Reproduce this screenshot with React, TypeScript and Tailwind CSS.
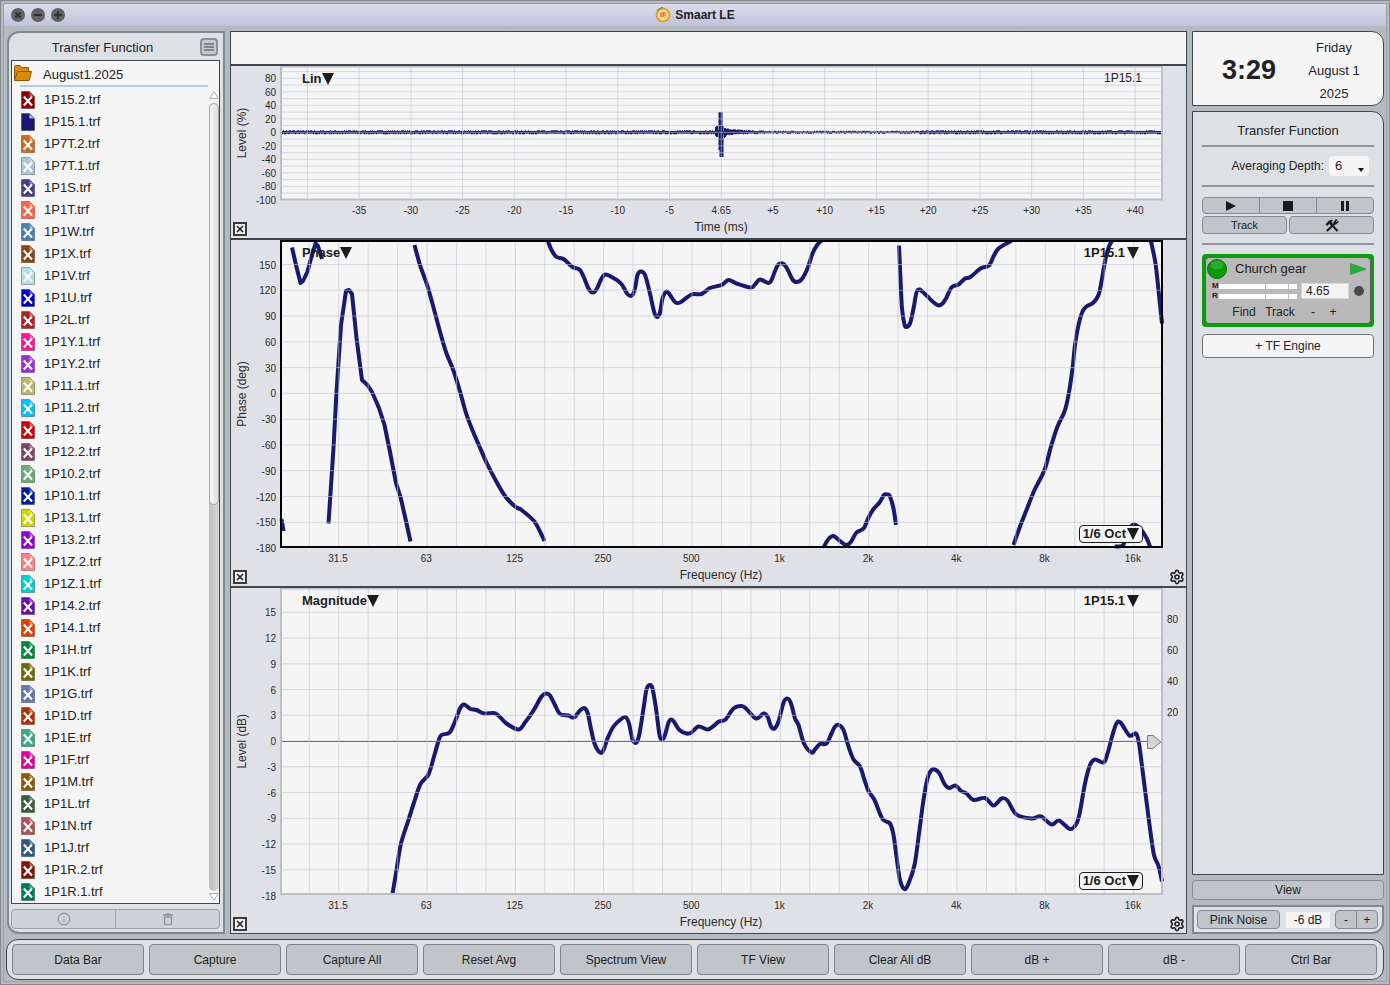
import React from 'react';
import { Info, Settings } from 'lucide-react';

type Point = [number, number];

interface TraceFile {
  name: string;
  color: string;
  active?: boolean;
}

const FILES: TraceFile[] = [
  { name: '1P15.2.trf', color: '#8b0000' },
  { name: '1P15.1.trf', color: '#191970', active: true },
  { name: '1P7T.2.trf', color: '#d2691e' },
  { name: '1P7T.1.trf', color: '#b0c4de' },
  { name: '1P1S.trf', color: '#483d8b' },
  { name: '1P1T.trf', color: '#ff6347' },
  { name: '1P1W.trf', color: '#4682b4' },
  { name: '1P1X.trf', color: '#8b4513' },
  { name: '1P1V.trf', color: '#b0e0e6' },
  { name: '1P1U.trf', color: '#0000cd' },
  { name: '1P2L.trf', color: '#b22222' },
  { name: '1P1Y.1.trf', color: '#ff1493' },
  { name: '1P1Y.2.trf', color: '#9932cc' },
  { name: '1P11.1.trf', color: '#bdb76b' },
  { name: '1P11.2.trf', color: '#00bfff' },
  { name: '1P12.1.trf', color: '#cc0000' },
  { name: '1P12.2.trf', color: '#804664' },
  { name: '1P10.2.trf', color: '#6aad74' },
  { name: '1P10.1.trf', color: '#001e9c' },
  { name: '1P13.1.trf', color: '#d6d600' },
  { name: '1P13.2.trf', color: '#9400d3' },
  { name: '1P1Z.2.trf', color: '#ff8080' },
  { name: '1P1Z.1.trf', color: '#00ced1' },
  { name: '1P14.2.trf', color: '#6a0dad' },
  { name: '1P14.1.trf', color: '#e04000' },
  { name: '1P1H.trf', color: '#008b3c' },
  { name: '1P1K.trf', color: '#6e6e00' },
  { name: '1P1G.trf', color: '#6478b4' },
  { name: '1P1D.trf', color: '#b43200' },
  { name: '1P1E.trf', color: '#3caa82' },
  { name: '1P1F.trf', color: '#dc00a0' },
  { name: '1P1M.trf', color: '#8c5a00' },
  { name: '1P1L.trf', color: '#3c5f3c' },
  { name: '1P1N.trf', color: '#b45050' },
  { name: '1P1J.trf', color: '#2d5a87' },
  { name: '1P1R.2.trf', color: '#821400' },
  { name: '1P1R.1.trf', color: '#007d5f' },
];

const COMMANDS = [
  'Data Bar',
  'Capture',
  'Capture All',
  'Reset Avg',
  'Spectrum View',
  'TF View',
  'Clear All dB',
  'dB +',
  'dB -',
  'Ctrl Bar',
];

// the low end has few bins, so it is drawn as straight segments
const PHASE_LOW: Point[][] = [
  [[281.5, 519], [283.5, 531]],
  [[292, 247.5], [296, 265], [300.5, 283], [303, 281], [307.5, 271.5], [310, 262], [315.5, 243.5], [318, 246], [322, 259]],
  [[328.5, 523.5], [333.5, 448], [336.5, 392], [341, 325], [346, 291], [349, 290], [352, 294], [356.5, 338], [362, 380], [367.5, 385], [372, 392], [379, 408], [384.5, 425], [390, 452], [396, 483], [400.5, 497], [406, 521], [410.5, 541.5]],
];

const PHASE: Point[][] = [
  [[414.5, 245], [420, 265], [426.5, 283], [432, 302], [439, 328], [446, 352], [452.5, 368], [459, 388], [466, 413], [473, 431.5], [479.5, 446.5], [486.5, 462.5], [495.5, 480], [505, 496], [515, 506.5], [521.5, 510], [534, 521], [540, 531.5], [544.5, 541]],
  [[547.5, 240], [551.5, 250], [556.5, 257], [563.5, 259], [572.5, 267], [579.5, 269.5], [583.5, 276.5], [588.5, 288.5], [592.5, 292.5], [596.5, 289.5], [601.5, 278.5], [605.5, 274.5], [612.5, 277.5], [621, 283.5], [627.5, 294], [632, 295.5], [635, 288.5], [637.5, 275], [641, 271.5], [645, 275], [649.5, 291.5], [655, 314.5], [659.5, 314.5], [662.5, 298.5], [666.5, 291.5], [670, 295], [675, 302], [680, 302.5], [691.5, 294.5], [701.5, 294], [710, 288], [721.5, 285], [728.5, 280], [736.5, 283.5], [750.5, 287.5], [755, 284.5], [760, 279.5], [768.5, 283], [771.5, 280], [777.5, 265.5], [782.5, 263.5], [786.5, 267.5], [792.5, 279.5], [796.5, 282], [801.5, 279.5], [807.5, 268.5], [812.5, 253.5], [817.5, 244.5], [822.5, 240]],
  [[824, 546.5], [828.5, 539], [833.5, 536], [840, 541], [846, 545], [850.5, 542.5], [856.5, 532.5], [863.5, 528.5], [868.5, 517.5], [873.5, 509], [879.5, 502.5], [884, 495], [887.5, 494.5], [890, 496.5], [893.5, 508.5], [896, 525]],
  [[899, 245.5], [900.5, 278.5], [902, 308.5], [904.5, 324.5], [906.5, 327], [910, 323.5], [913.5, 308.5], [916.5, 292.5], [919.5, 289.5], [925, 294], [931, 300], [937.5, 305], [941.5, 304.5], [946, 298.5], [951.5, 287.5], [958.5, 284.5], [965, 278.5], [970.5, 277], [980.5, 268.5], [989, 265.5], [993.5, 256.5], [998.5, 248.5], [1010, 241.5], [1012, 240]],
  [[1013.5, 545], [1020, 526.5], [1026.5, 510], [1034.5, 490], [1044.5, 470], [1051, 446.5], [1057.5, 426.5], [1064.5, 411.5], [1068.5, 395], [1072.5, 368.5], [1075, 345], [1078.5, 325], [1082.5, 311.5], [1086.5, 306.5], [1093.5, 302.5], [1098.5, 295], [1101.5, 281.5], [1105, 261.5], [1109, 246.5], [1112.5, 240]],
  [[1115, 546.5], [1123, 545], [1128, 531.5], [1133.5, 524.5], [1140, 528.5], [1146.5, 538], [1150, 546.5]],
  [[1151, 241.5], [1155.5, 263.5], [1159, 295], [1162, 323.5]],
];

const MAGNITUDE: Point[] = [
  [392.5, 894], [396.5, 870], [401, 843.5], [408.5, 820], [414, 802.5], [420.5, 784], [428.5, 774.5], [434, 756.5], [438.5, 741], [441.5, 735], [449.5, 732.5], [455, 721.5], [460, 708.5], [464, 704.5], [470.5, 709], [476.5, 710], [484, 713.5], [493.5, 713], [498.5, 715.5], [506.5, 723.5], [518.5, 729.5], [525, 722.5], [533.5, 710.5], [541.5, 696.5], [546, 693.5], [550, 695.5], [555, 705], [560, 714], [568.5, 715.5], [574, 717.5],
  [579.5, 711], [584, 708], [587.5, 712.5], [590.5, 726.5], [594.5, 743.5], [600, 752.5], [603.5, 750], [607.5, 738.5], [613.5, 726.5], [620, 720], [625.5, 717], [629, 723.5], [632.5, 739.5], [636.5, 742.5], [639.5, 733.5], [643.5, 708.5], [646.5, 689.5], [650, 685], [652.5, 688.5], [656, 708.5], [659.5, 735], [662, 740], [665, 735], [668.5, 722.5], [671.5, 719.5], [674.5, 722.5], [679.5, 730], [686.5, 733.5], [691.5, 732.5], [698.5, 726.5], [707.5, 729.5], [713.5, 726], [719, 721.5], [725.5, 719.5], [733.5, 708.5], [741.5, 706], [746.5, 709], [756, 718.5], [763.5, 713.5], [767.5, 716.5], [771, 726.5], [774.5, 728.5], [778.5, 721.5], [784, 701.5], [788.5, 699], [791.5, 705], [795, 718.5], [798.5, 725], [804, 743.5], [811.5, 752.5], [815, 749.5], [820, 744], [826.5, 743.5], [831.5, 733.5], [835, 726.5], [839, 725], [843.5, 730], [848.5, 746.5], [853.5, 759.5], [860, 766.5], [864.5, 780], [868.5, 791], [874.5, 800], [882.5, 819],
  [890, 823.5], [893.5, 835], [896.5, 856.5], [900, 880], [904.5, 889], [908.5, 883.5], [914.5, 865], [919, 833.5], [923.5, 800], [927.5, 778.5], [931, 770.5], [935, 769.5], [939.5, 773.5], [944.5, 784], [949, 788], [955.5, 785.5], [961, 791], [966.5, 793.5], [973.5, 800], [985, 798], [993.5, 805.5], [1001.5, 798.5], [1007.5, 800.5], [1016.5, 814.5], [1031.5, 818.5], [1041, 816.5], [1051.5, 824.5], [1059, 820.5], [1070, 829], [1076.5, 823.5], [1080, 811.5], [1085, 783.5], [1090, 765], [1095, 759.5], [1103.5, 762.5], [1107.5, 753.5], [1112.5, 735], [1116.5, 723.5], [1120.5, 722.5], [1129.5, 735.5], [1136, 733.5], [1139, 743.5], [1142.5, 770], [1146.5, 801.5], [1150, 828.5], [1154, 855], [1158.5, 866], [1162, 881.5],
];

// third-octave grid, labels sit on every third line
const FREQ_LINES = Array.from({ length: 29 }, (_, i) => 309.3 + i * 29.44);
const FREQ_LABELS = ['31.5', '63', '125', '250', '500', '1k', '2k', '4k', '8k', '16k'];
const TIME_LINES = Array.from({ length: 17 }, (_, i) => 307.4 + i * 51.73);
const TIME_LABELS = ['-35', '-30', '-25', '-20', '-15', '-10', '-5', '4.65', '+5', '+10', '+15', '+20', '+25', '+30', '+35', '+40'];

const linearPath = (pts: Point[]) => 'M' + pts.map((p) => p.join(' ')).join('L');

const smoothPath = (pts: Point[]) => {
  let d = `M${pts[0][0]} ${pts[0][1]}`;
  for (let i = 0; i < pts.length - 1; i++) {
    const p0 = pts[i - 1] || pts[i];
    const p1 = pts[i];
    const p2 = pts[i + 1];
    const p3 = pts[i + 2] || p2;
    d += `C${p1[0] + (p2[0] - p0[0]) / 6} ${p1[1] + (p2[1] - p0[1]) / 6} ${p2[0] - (p3[0] - p1[0]) / 6} ${p2[1] - (p3[1] - p1[1]) / 6} ${p2[0]} ${p2[1]}`;
  }
  return d;
};

const impulsePath = () => {
  let d = '';
  let seed = 7;
  for (let x = 282; x < 1162; x++) {
    seed = (seed * 16807) % 2147483647;
    const r = seed / 2147483647;
    const after = x > 723 && x < 920;
    const decay = after ? 3 * Math.exp(-(x - 723) / 16) : 0;
    const base = after ? 0.9 : 1.4;
    const up = base + decay + (r > 0.6 ? 0.6 : 0);
    const down = base + decay * 0.7 + (r < 0.35 ? 0.6 : 0);
    d += `M${x + 0.5} ${132.3 - up}V${132.3 + down}`;
  }
  return d;
};

interface ChartProps {
  viewBox: string;
  frame: { y: number; h: number; color: string };
  xLines: number[];
  yLines: number[];
  xTicks: { x: number; label: string }[];
  yTicks: { y: number; label: string }[];
  rightTicks?: { y: number; label: string }[];
  xTitle: string;
  yTitle: string;
  xTickY: number;
  trace: React.ReactNode;
  settings?: boolean;
  children: React.ReactNode;
}

const Chart: React.FC<ChartProps> = ({
  viewBox,
  frame,
  xLines,
  yLines,
  xTicks,
  yTicks,
  rightTicks = [],
  xTitle,
  yTitle,
  xTickY,
  trace,
  settings = false,
  children,
}) => {
  const midY = frame.y + frame.h / 2;
  const bottom = frame.y + frame.h;
  return (
    <section className="relative bg-[#e0e1e6]">
      <svg viewBox={viewBox} className="block w-full h-auto" fill="#2b2b2b">
        <rect x="281" y={frame.y} width="881" height={frame.h} fill="#f5f5f5" />
        {xTicks.map((t) => (
          <text key={t.label} x={t.x} y={xTickY} fontSize="10" textAnchor="middle">
            {t.label}
          </text>
        ))}
        {yTicks.map((t) => (
          <text key={t.label} x="276" y={t.y + 4} fontSize="10" textAnchor="end">
            {t.label}
          </text>
        ))}
        {rightTicks.map((t) => (
          <text key={t.label} x="1167" y={t.y + 4} fontSize="10">
            {t.label}
          </text>
        ))}
        <text x="721" y={xTickY + 17} fontSize="12" textAnchor="middle">
          {xTitle}
        </text>
        <text transform={`translate(246 ${midY}) rotate(-90)`} fontSize="12" textAnchor="middle">
          {yTitle}
        </text>
        <g fill="none">{trace}</g>
        <g stroke="#bfc5cf" strokeOpacity="0.6">
          {xLines.map((x) => (
            <line key={x} x1={x} x2={x} y1={frame.y} y2={bottom} />
          ))}
          {yLines.map((y) => (
            <line key={y} x1="281" x2="1162" y1={y} y2={y} />
          ))}
        </g>
        <rect x="281" y={frame.y} width="881" height={frame.h} fill="none" stroke={frame.color} strokeWidth="2" />
      </svg>
      {children}
      <button
        aria-label="Close plot"
        className="absolute left-0.5 bottom-0.5 w-3.5 h-3.5 bg-[#f0f0f0] border-2 border-[#3a3a3a] flex items-center justify-center"
      >
        <svg viewBox="0 0 8 8" className="w-2 h-2" stroke="#222" strokeWidth="1.6">
          <path d="M1 1L7 7M7 1L1 7" />
        </svg>
      </button>
      {settings && (
        <button aria-label="Plot settings" className="absolute right-px bottom-px">
          <Settings size={16} strokeWidth={2.4} color="#222" />
        </button>
      )}
    </section>
  );
};

const PlotSelect: React.FC<{ value: string; label: string; className: string }> = ({ value, label, className }) => (
  <div className={`absolute flex items-center ${className}`}>
    <select
      aria-label={label}
      className="appearance-none [field-sizing:content] bg-transparent font-bold text-[13px] leading-4 text-[#1c1c1c] outline-none"
    >
      <option>{value}</option>
    </select>
    <svg viewBox="0 0 12 12" className="w-3 h-3 pointer-events-none" fill="#1c1c1c">
      <path d="M0 0H12L6 12Z" />
    </svg>
  </div>
);

const FileIcon: React.FC<{ file: TraceFile }> = ({ file }) => (
  <svg viewBox="0 0 14 18" className="w-3.5 h-[18px] shrink-0">
    <path d="M0.5 0.5H8.5L13.5 5.5V17.5H0.5Z" fill={file.color} stroke="#000" strokeOpacity="0.3" />
    <path d="M8.5 1V5.5H13Z" fill="#fff" fillOpacity={file.active ? 0.7 : 0.35} />
    {!file.active && <path d="M2.8 5.5L11 14.5M11 5.5L2.8 14.5" stroke="#fff" strokeWidth="2" />}
  </svg>
);

const btn = 'border border-[#858c91] bg-[#bfc5c9] text-xs text-[#222] flex items-center justify-center';

const TitleBar = () => (
  <header className="relative h-[22px] bg-linear-to-b from-[#dcdeeb] to-[#c0c3db] flex items-center justify-center gap-1">
    <div className="absolute left-[7px] top-1 flex gap-1.5">
      {['M4.5 4.5L9.5 9.5M9.5 4.5L4.5 9.5', 'M3 7H11', 'M3 7H11M7 3V11'].map((d, i) => (
        <button key={d} aria-label={['Close', 'Minimize', 'Zoom'][i]}>
          <svg viewBox="0 0 14 14" className="block w-3.5 h-3.5">
            <circle cx="7" cy="7" r="7" fill="#626262" />
            <path d={d} stroke="#303030" strokeWidth="2" />
          </svg>
        </button>
      ))}
    </div>
    <svg viewBox="0 0 16 16" className="w-4 h-4">
      <circle cx="8" cy="8" r="7.5" fill="#e9a02c" />
      <path d="M2 4A7.5 7.5 0 0 1 8 0.5" stroke="#5a9a4a" fill="none" strokeWidth="1.2" />
      <circle cx="8" cy="8" r="4.8" fill="#f6cf85" stroke="#fff" strokeOpacity="0.8" />
      <path d="M6 5.5V10M8 10V5.8H11M8 8H10.5" stroke="#c87814" strokeWidth="1.2" fill="none" />
    </svg>
    <h1 className="text-xs font-bold text-[#222]">Smaart LE</h1>
  </header>
);

const DataBar = () => (
  <aside className="w-[218px] shrink-0 flex flex-col border-2 border-[#7f8a90] rounded-l-xl bg-[#dde1e4] pl-0.5 pr-[3px] pb-[3px]">
    <div className="h-[27px] flex items-center">
      <h2 className="flex-1 pt-0.5 pr-1.5 text-center text-[13px]">Transfer Function</h2>
      <button
        aria-label="Menu"
        className="w-[18px] h-[18px] mr-0.5 border-2 border-[#8b9297] rounded bg-[#c3c9cd] flex items-center justify-center"
      >
        <svg viewBox="0 0 10 8" className="w-2.5 h-2" stroke="#444" strokeWidth="1.2">
          <path d="M0 1H10M0 4H10M0 7H10" />
        </svg>
      </button>
    </div>
    <div className="flex-1 border border-[#3f474b] bg-[#f5f5f5]">
      <div className="h-[27px] flex items-center pl-0.5 pb-1 gap-[11px]">
        <svg viewBox="0 0 18 16" className="w-[18px] h-4" fill="#d98c08" stroke="#8a5600">
          <path d="M0.5 15V1.5L1.5 0.5H6L7.5 2.5H14.5V15Z" />
          <path d="M0.5 15.5L3.5 6.5H17.5L15 15.5Z" />
        </svg>
        <span className="pt-1 text-[13px]">August1.2025</span>
      </div>
      <div className="flex">
        <ul className="flex-1 ml-2 -mt-[3px] pt-0.5 border-t-2 border-[#b8c9df]">
          {FILES.map((file) => (
            <li key={file.name}>
              <button className="h-[22px] flex items-center gap-[9px] px-px text-[13px]">
                <FileIcon file={file} />
                {file.name}
              </button>
            </li>
          ))}
        </ul>
        <div className="w-[11px] flex flex-col items-center pt-[3px]">
          <svg viewBox="0 0 10 8" className="w-2.5 h-2" fill="#fff" stroke="#aaa">
            <path d="M5 0.8L9.2 7.5H0.8Z" />
          </svg>
          <div className="w-2.5 flex-1 mt-1 rounded-full bg-linear-to-r from-[#bdbdbd] to-[#d8d8d8]">
            <div className="h-[51%] rounded-full border border-[#aaa] bg-linear-to-r from-[#fafafa] to-[#ddd]"></div>
          </div>
          <svg viewBox="0 0 10 8" className="w-2.5 h-2 my-0.5" fill="#fff" stroke="#aaa">
            <path d="M5 7.2L9.2 0.5H0.8Z" />
          </svg>
        </div>
      </div>
    </div>
    <div className="mt-[5px] h-5 flex border border-[#9aa2a7] rounded bg-[#cdd3d7] text-[#8e969b]">
      <button aria-label="Info" className="flex-1 flex items-center justify-center border-r border-[#9aa2a7]">
        <Info size={14} />
      </button>
      <button aria-label="Delete" className="flex-1 flex items-center justify-center">
        <svg viewBox="0 0 10 12" className="w-2.5 h-3" fill="none" stroke="currentColor">
          <path d="M0 2H10M3.5 0.8H6.5" strokeWidth="1.3" />
          <path d="M1.6 3.8V11.3H8.4V3.8Z" strokeWidth="1.3" />
        </svg>
      </button>
    </div>
  </aside>
);

const PlotArea = () => {
  const freqTicks = FREQ_LABELS.map((label, i) => ({ label, x: 338 + i * 88.32 }));
  const dbTicks = Array.from({ length: 12 }, (_, i) => ({ label: String(15 - i * 3), y: 612.3 + i * 25.75 }));
  const degTicks = Array.from({ length: 12 }, (_, i) => ({ label: String(150 - i * 30), y: 264.5 + i * 25.78 }));
  const pctTicks = Array.from({ length: 10 }, (_, i) => ({ label: String(80 - i * 20), y: 78.3 + i * 13.5 }));
  return (
    <main className="flex-1 min-w-0 flex flex-col border border-[#3f474b] bg-[#e0e1e6]">
      <div className="h-[34px] bg-[#f5f5f5] border-b-2 border-[#3f474b]"></div>
      <Chart
        viewBox="231 66 955 172"
        frame={{ y: 66.5, h: 133, color: '#bcc0c6' }}
        xLines={TIME_LINES}
        yLines={Array.from({ length: 19 }, (_, i) => 71.6 + i * 6.75)}
        xTicks={TIME_LABELS.map((label, i) => ({ label, x: TIME_LINES[i + 1] }))}
        yTicks={pctTicks}
        xTitle="Time (ms)"
        yTitle="Level (%)"
        xTickY={214}
        trace={
          <g stroke="#191970">
            <path d={impulsePath()} />
            <path d="M715.5 127V136M716.5 126V137M717.5 126V137M724.5 128V138M725.5 128.5V137" />
            <path d="M720.5 112V150" strokeWidth="4" />
            <path d="M721.5 126V157" strokeWidth="4" />
          </g>
        }
      >
        <PlotSelect label="Impulse scale" value="Lin" className="left-[71px] top-[5px]" />
        <span className="absolute right-11 top-1 text-xs leading-4 text-[#222]">1P15.1</span>
      </Chart>
      <div className="h-0.5 bg-[#3f474b]"></div>
      <Chart
        viewBox="231 240 955 346"
        frame={{ y: 241, h: 306, color: '#000' }}
        xLines={FREQ_LINES}
        yLines={degTicks.slice(0, 11).map((t) => t.y)}
        xTicks={freqTicks}
        yTicks={degTicks}
        xTitle="Frequency (Hz)"
        yTitle="Phase (deg)"
        xTickY={562}
        settings
        trace={
          <g stroke="#191970" strokeWidth="4">
            {PHASE_LOW.map((seg, i) => (
              <path key={i} d={linearPath(seg)} strokeLinejoin="round" />
            ))}
            {PHASE.map((seg, i) => (
              <path key={i} d={smoothPath(seg)} />
            ))}
          </g>
        }
      >
        <PlotSelect label="Phase plot type" value="Phase" className="left-[71px] top-[5px]" />
        <PlotSelect label="Phase trace" value="1P15.1" className="right-[47px] top-[5px] gap-0.5" />
        <PlotSelect
          label="Phase smoothing"
          value="1/6 Oct"
          className="right-[43px] bottom-[43px] gap-px h-[18px] px-[3px] border border-[#1c1c1c] rounded bg-[#f5f5f5]"
        />
      </Chart>
      <div className="h-0.5 bg-[#3f474b]"></div>
      <Chart
        viewBox="231 588 955 345"
        frame={{ y: 588.5, h: 305.5, color: '#bcc0c6' }}
        xLines={FREQ_LINES}
        yLines={dbTicks.slice(0, 11).map((t) => t.y)}
        xTicks={freqTicks}
        yTicks={dbTicks}
        rightTicks={['80', '60', '40', '20'].map((label, i) => ({ label, y: 619.3 + i * 31 }))}
        xTitle="Frequency (Hz)"
        yTitle="Level (dB)"
        xTickY={909}
        settings
        trace={
          <>
            <path d={smoothPath(MAGNITUDE)} stroke="#191970" strokeWidth="4" />
            <line x1="281" x2="1162" y1="741.5" y2="741.5" stroke="#44474c" />
            <path d="M1147.5 735.5H1153L1161 742L1153 748.5H1147.5Z" fill="#d6d6d6" stroke="#777" />
          </>
        }
      >
        <PlotSelect label="Magnitude plot type" value="Magnitude" className="left-[71px] top-[5px]" />
        <PlotSelect label="Magnitude trace" value="1P15.1" className="right-[47px] top-[5px] gap-0.5" />
        <PlotSelect
          label="Magnitude smoothing"
          value="1/6 Oct"
          className="right-[43px] bottom-[43px] gap-px h-[18px] px-[3px] border border-[#1c1c1c] rounded bg-[#f5f5f5]"
        />
      </Chart>
    </main>
  );
};

const Meter: React.FC<{ name: string }> = ({ name }) => (
  <div className="flex items-center h-2.5">
    <span className="w-[7px] text-[8px] leading-none font-bold">{name}</span>
    <div className="flex gap-px">
      <i className="w-[46px] h-[5px] bg-white"></i>
      <i className="w-[22px] h-[5px] bg-white"></i>
      <i className="w-2 h-[5px] bg-white"></i>
    </div>
  </div>
);

const EngineCard = () => (
  <div className="mt-[9px] border-3 border-[#0b9c10] rounded bg-[#0b9c10]">
    <div className="h-[67px] border border-[#5c5c5c] rounded-sm bg-[#b9b9b9] px-px">
      <div className="flex items-center h-[22px]">
        <svg viewBox="0 0 20 20" className="w-5 h-5">
          <circle cx="10" cy="10" r="9.5" fill="#089a08" stroke="#066d06" />
          <ellipse cx="10" cy="6" rx="6.5" ry="4.5" fill="#fff" fillOpacity="0.15" />
        </svg>
        <h3 className="ml-2 flex-1 text-[13px]">Church gear</h3>
        <button aria-label="Run engine" className="mr-0.5">
          <svg viewBox="0 0 17 12" className="block w-[17px] h-3">
            <path d="M0.5 0.5L16 6L0.5 11.5Z" fill="#22b03c" stroke="#3f9a50" />
          </svg>
        </button>
      </div>
      <div className="flex items-center h-[22px] pl-[5px]">
        <div>
          <Meter name="M" />
          <Meter name="R" />
        </div>
        <input
          aria-label="Delay (ms)"
          defaultValue="4.65"
          className="ml-1 w-12 h-4 pl-1 text-xs bg-[#f3f3f3] border border-[#d8d8d8] outline-none"
        />
        <span className="ml-[5px] w-2.5 h-2.5 rounded-full bg-[#4a4a4a]"></span>
      </div>
      <div className="flex items-center h-5 pl-[22px] text-xs">
        <button className="w-[30px]">Find</button>
        <button className="ml-1 w-[34px]">Track</button>
        <button className="ml-1.5 w-5">-</button>
        <button className="w-5">+</button>
      </div>
    </div>
  </div>
);

const ControlBar = () => (
  <aside className="w-48 shrink-0 flex flex-col gap-[5px]">
    <div className="h-[75px] flex items-center border border-[#3f474b] rounded-r-xl bg-[#f5f5f5]">
      <time className="flex-1 pl-5 pt-1 text-center text-[27px] leading-none font-bold">3:29</time>
      <div className="w-[98px] pt-[3px] text-center text-[13px] leading-[23px] text-[#222]">
        <p>Friday</p>
        <p>August 1</p>
        <p>2025</p>
      </div>
    </div>
    <div className="flex-1 border border-[#3f474b] rounded-tr-xl bg-[#dde1e4] px-[9px]">
      <h2 className="h-[33px] pt-[9px] text-center text-[13px]">Transfer Function</h2>
      <hr className="border-t-2 border-[#8f979c]" />
      <div className="h-[38px] flex items-center justify-end gap-[5px] pr-[5px] text-xs">
        <label htmlFor="avg-depth">Averaging Depth:</label>
        <div className="relative">
          <select
            id="avg-depth"
            className="appearance-none block w-10 h-5 pl-1.5 rounded-sm bg-[#f5f5f5] text-[13px] outline-none"
          >
            <option>6</option>
          </select>
          <svg viewBox="0 0 6 4" className="absolute right-[5px] bottom-1 w-1.5 h-1 pointer-events-none" fill="#111">
            <path d="M0 0H6L3 4Z" />
          </svg>
        </div>
      </div>
      <hr className="border-t-2 border-[#8f979c]" />
      <div className="mt-2.5 flex">
        <button aria-label="Play" className={`${btn} flex-1 h-[17px] rounded-l`}>
          <svg viewBox="0 0 10 10" className="w-2.5 h-2.5" fill="#1a1a1a"><path d="M0 0L10 5L0 10Z" /></svg>
        </button>
        <button aria-label="Stop" className={`${btn} flex-1 h-[17px] -mx-px`}>
          <svg viewBox="0 0 10 10" className="w-2.5 h-2.5" fill="#1a1a1a"><path d="M0 0H10V10H0Z" /></svg>
        </button>
        <button aria-label="Pause" className={`${btn} flex-1 h-[17px] rounded-r`}>
          <svg viewBox="0 0 10 10" className="w-2.5 h-2.5" fill="#1a1a1a"><path d="M1 0H4V10H1ZM6 0H9V10H6Z" /></svg>
        </button>
      </div>
      <div className="mt-0.5 flex gap-0.5">
        <button className="flex-1 h-[18px] rounded border border-[#858c91] bg-[#bfc5c9] text-[11px] text-[#222]">Track</button>
        <button aria-label="Tools" className={`${btn} flex-1 h-[18px] rounded`}>
          <svg viewBox="0 0 14 13" className="w-3.5 h-[13px]" fill="none" stroke="#1a1a1a">
            <path d="M12.5 12L6 5" strokeWidth="2" />
            <path d="M0.8 5.4L2.2 3.8C3.5 1.8 5.5 0.8 7.8 1.2L6.2 2.6L7.6 4.2L5.6 6L4.2 4.6L2.4 6.6Z" fill="#1a1a1a" strokeWidth="0.5" />
            <path d="M1.8 12L10 4.2" strokeWidth="2.2" />
            <path d="M12.2 0.8L10.6 2.4L11.4 3.4L13.2 2.2A2.8 2.8 0 0 1 9.2 4.8A2.8 2.8 0 0 1 12.2 0.8Z" fill="#1a1a1a" strokeWidth="0.7" />
          </svg>
        </button>
      </div>
      <hr className="mt-[9px] border-t-2 border-[#8f979c]" />
      <EngineCard />
      <button className="mt-[7px] w-full h-6 rounded border border-[#6d7478] bg-[#f5f5f5] text-xs">+ TF Engine</button>
    </div>
    <button className={`${btn} h-5 rounded`}>View</button>
    <div className="h-[29px] flex items-center border-2 border-[#7f8a90] rounded-br-xl bg-[#dde1e4] pl-[3px] pr-1">
      <button className={`${btn} w-[83px] h-[19px] rounded`}>Pink Noise</button>
      <span className="ml-1.5 w-11 h-4 bg-[#f5f5f5] text-center text-xs leading-4">-6 dB</span>
      <div className="ml-auto flex">
        <button className={`${btn} w-[22px] h-[19px] rounded-l`}>-</button>
        <button className={`${btn} w-[22px] h-[19px] rounded-r -ml-px`}>+</button>
      </div>
    </div>
  </aside>
);

const App: React.FC = () => {
  return (
    <div className="min-h-screen flex flex-col border border-[#85898c] bg-[#b3bbc1] p-0.5 font-['Liberation_Sans',Arial,sans-serif] text-[#222]">
      <div className="flex-1 flex flex-col border border-[#9ba1a7]">
        <TitleBar />
        <div className="flex gap-[5px] pl-[3px] pr-0.5 pt-[5px]">
          <DataBar />
          <PlotArea />
          <ControlBar />
        </div>
        <footer className="mt-[5px] ml-0.5 mr-0.5 h-[41px] flex gap-[5px] border border-[#3f474b] rounded-xl bg-[#dde1e4] pl-[5px] pr-1.5 py-1">
          {COMMANDS.map((label) => (
            <button
              key={label}
              className="flex-1 rounded border border-[#7c8489] bg-[#bfc5c9] text-xs text-[#222]"
            >
              {label}
            </button>
          ))}
        </footer>
      </div>
    </div>
  );
};

export default App;
